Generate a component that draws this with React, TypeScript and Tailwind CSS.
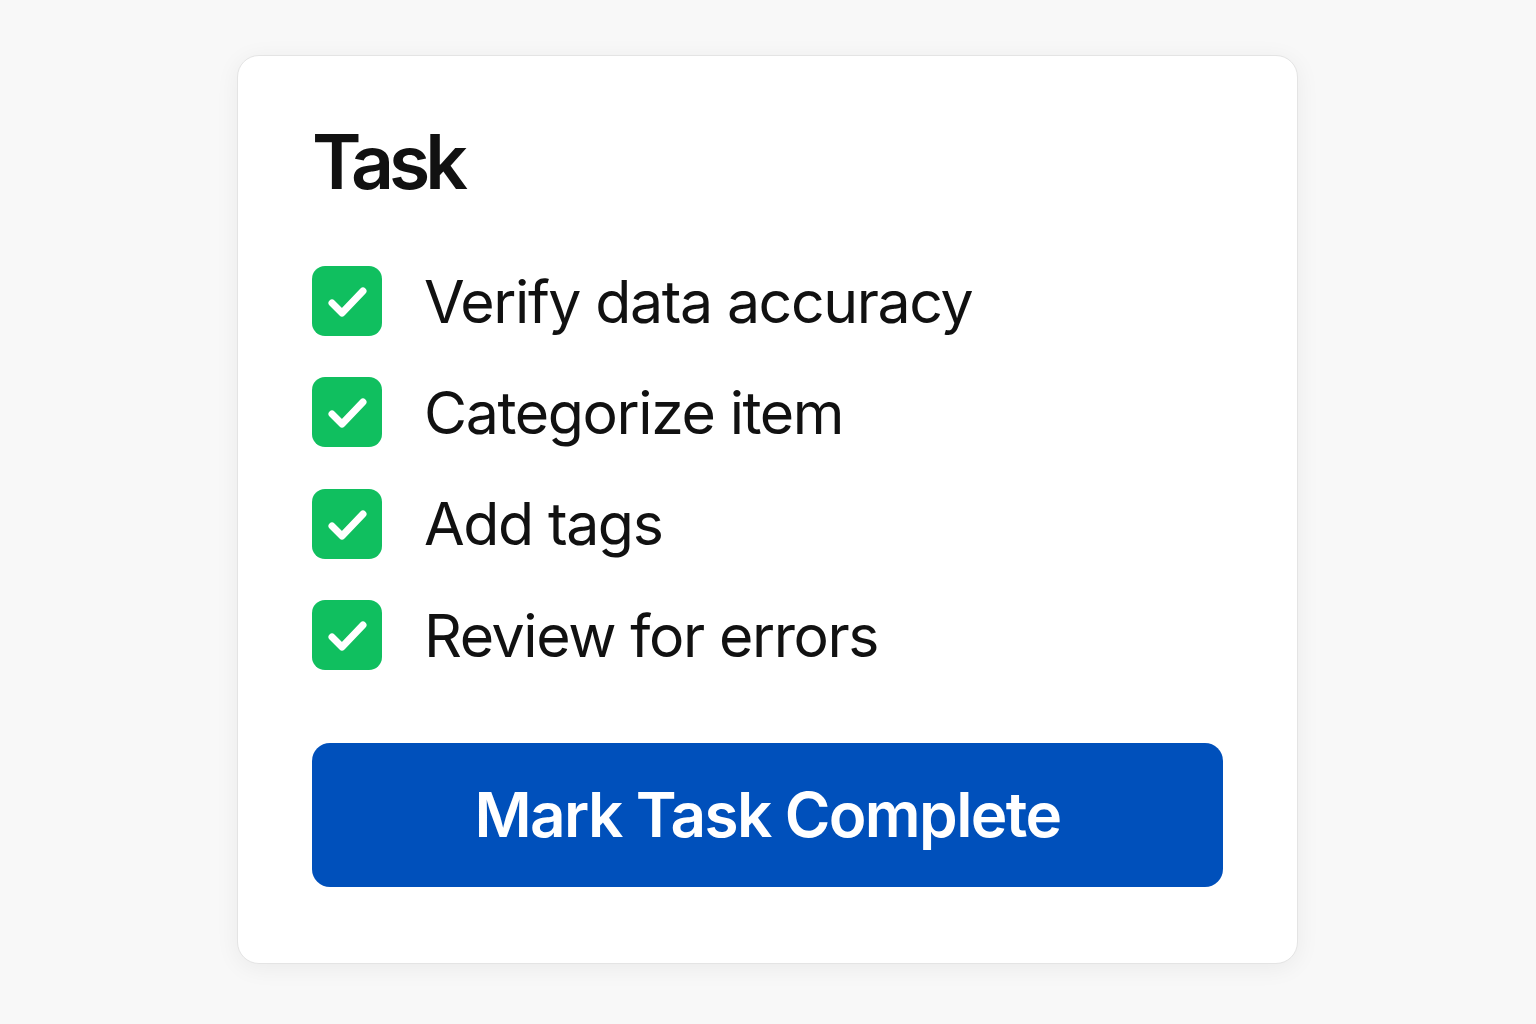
import React from 'react';

const items = ['Verify data accuracy', 'Categorize item', 'Add tags', 'Review for errors'];

const CheckBox: React.FC = () => (
  <div className="w-[70px] h-[70px] shrink-0 rounded-[13px] bg-[#10bf5f] flex items-center justify-center">
    <svg width="70" height="70" viewBox="0 0 70 70" fill="none">
      <path d="M20 37 L30 47 L51 25" stroke="#ffffff" strokeWidth="7" strokeLinecap="round" strokeLinejoin="round" />
    </svg>
  </div>
);

export default function App() {
  return (
    <div className="w-[1536px] h-[1024px] bg-[#f8f8f8] pt-[55px] pl-[237px] font-['Inter',sans-serif]">
      <div className="w-[1061px] h-[909px] bg-white rounded-[22px] border border-[#e4e4e4] shadow-[0_4px_24px_rgba(0,0,0,0.06)] px-[74px] pt-[68px]">
        <h1 className="text-[75px] leading-none font-semibold text-[#111111] tracking-[-5px]">Task</h1>
        <ul className="mt-[67px] flex flex-col gap-[41.4px]">
          {items.map((t) => (
            <li key={t} className="flex items-center gap-[42px]">
              <CheckBox />
              <span className="text-[59px] leading-none text-[#111111] tracking-[-1.4px]">{t}</span>
            </li>
          ))}
        </ul>
        <button className="mt-[73px] w-[911px] h-[144px] rounded-[18px] bg-[#0050bb] text-white text-[62px] font-semibold leading-none tracking-[-1.6px] flex items-center justify-center">
          Mark Task Complete
        </button>
      </div>
    </div>
  );
}
